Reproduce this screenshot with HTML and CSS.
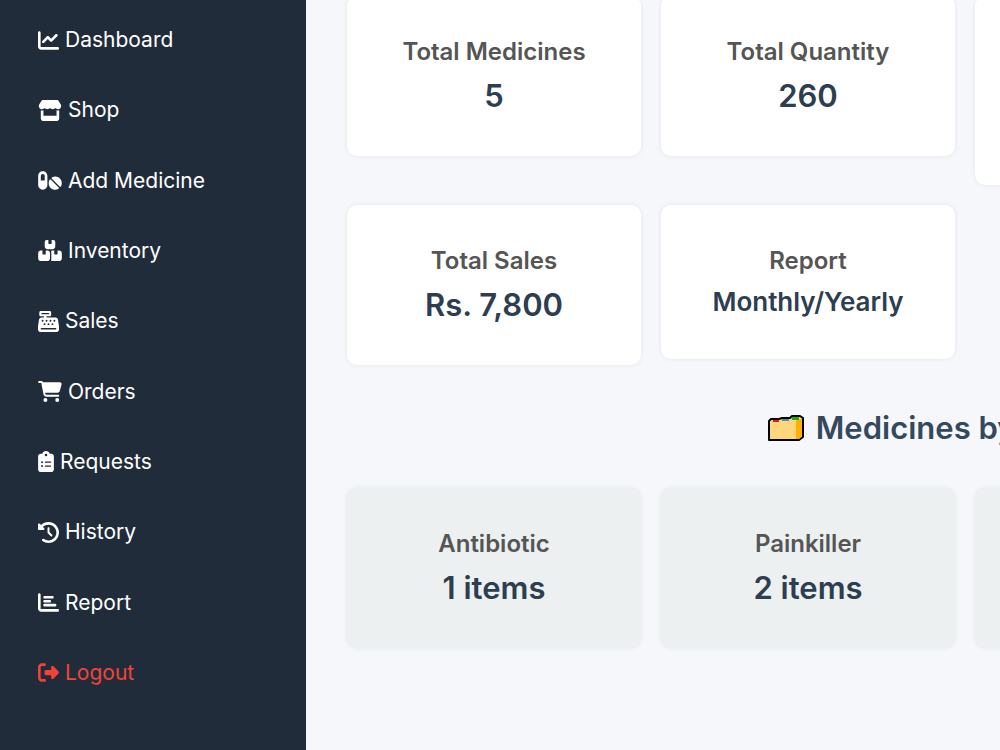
FILE: index.html
```html
<!DOCTYPE html>
<html lang="en">
<head>
<meta charset="utf-8">
<meta name="viewport" content="width=device-width, initial-scale=1">
<title>Dashboard</title>
<link rel="stylesheet" href="styles.css">
</head>
<body>
<div class="layout">
  <nav class="sidebar">
    <a class="nav-link" href="#"><svg class="icon" viewBox="0 0 512 512"><path d="M64 64c0-17.700-14.300-32-32-32S0 46.300 0 64V400c0 44.200 35.800 80 80 80H480c17.700 0 32-14.300 32-32s-14.300-32-32-32H80c-8.800 0-16-7.200-16-16V64zm406.600 86.600c12.500-12.500 12.500-32.800 0-45.300s-32.800-12.500-45.300 0L320 210.700l-57.400-57.400c-12.500-12.500-32.800-12.500-45.300 0l-112 112c-12.500 12.500-12.500 32.800 0 45.300s32.800 12.500 45.300 0L240 221.300l57.400 57.400c12.500 12.500 32.800 12.500 45.300 0l128-128z"/></svg>Dashboard</a>
    <a class="nav-link" href="#"><svg class="icon icon-wide" viewBox="0 0 576 512"><path d="M547.600 103.800L490.300 13.100C485.200 5 476.100 0 466.400 0H109.600C99.900 0 90.800 5 85.700 13.100L28.300 103.800c-29.600 46.800-3.400 111.900 51.900 119.400c4 .5 8.100 .8 12.100 .8c26.100 0 49.300-11.400 65.200-29c15.900 17.600 39.100 29 65.200 29c26.100 0 49.300-11.400 65.200-29c15.900 17.600 39.100 29 65.200 29c26.200 0 49.300-11.400 65.200-29c16 17.600 39.100 29 65.200 29c4.100 0 8.100-.3 12.100-.8c55.500-7.400 81.800-72.500 52.100-119.400zM499.700 254.900l-.1 0c-5.300 .7-10.700 1.100-16.200 1.100c-12.400 0-24.300-1.900-35.400-5.300V384H128V250.600c-11.200 3.500-23.200 5.400-35.600 5.400c-5.500 0-11-.4-16.300-1.100l-.1 0c-4.100-.6-8.100-1.300-12-2.300V384v64c0 35.300 28.700 64 64 64H448c35.300 0 64-28.700 64-64V384 252.600c-4 1-8 1.800-12.300 2.300z"/></svg>Shop</a>
    <a class="nav-link" href="#"><svg class="icon icon-wide" viewBox="0 0 576 512"><path d="M112 96c-26.500 0-48 21.500-48 48V256h96V144c0-26.500-21.500-48-48-48zM0 144C0 82.100 50.100 32 112 32s112 50.100 112 112V368c0 61.900-50.100 112-112 112S0 429.900 0 368V144zM554.900 399.400c-7.100 12.300-23.700 13.100-33.800 3.100L333.500 214.900c-10-10-9.300-26.700 3.100-33.800C360 167.700 387.100 160 416 160c88.400 0 160 71.600 160 160c0 28.900-7.700 56-21.100 79.400zm-59.500 59.500C472 472.300 444.900 480 416 480c-88.400 0-160-71.600-160-160c0-28.900 7.700-56 21.100-79.400c7.100-12.300 23.700-13.100 33.800-3.100L498.500 425.100c10 10 9.300 26.700-3.100 33.800z"/></svg>Add Medicine</a>
    <a class="nav-link" href="#"><svg class="icon icon-wide" viewBox="0 0 576 512"><path d="M248 0H208c-26.500 0-48 21.500-48 48V160c0 35.300 28.700 64 64 64H352c35.300 0 64-28.700 64-64V48c0-26.500-21.500-48-48-48H328V80c0 8.800-7.200 16-16 16H264c-8.800 0-16-7.200-16-16V0zM64 256c-35.300 0-64 28.700-64 64V448c0 35.300 28.700 64 64 64H224c35.300 0 64-28.700 64-64V320c0-35.300-28.700-64-64-64H184v80c0 8.800-7.200 16-16 16H120c-8.800 0-16-7.200-16-16V256H64zM352 512H512c35.300 0 64-28.700 64-64V320c0-35.300-28.700-64-64-64H472v80c0 8.800-7.200 16-16 16H408c-8.800 0-16-7.200-16-16V256H352c-15 0-28.800 5.100-39.700 13.800c4.900 10.400 7.700 22 7.700 34.200V464c0 12.200-2.800 23.800-7.700 34.200C323.200 506.900 337 512 352 512z"/></svg>Inventory</a>
    <a class="nav-link" href="#"><svg class="icon" viewBox="0 0 512 512"><path d="M64 0C46.300 0 32 14.300 32 32V96c0 17.700 14.300 32 32 32h80v32H87c-31.600 0-58.500 23.100-63.300 54.400L1.100 364.100C.4 368.800 0 373.600 0 378.400V448c0 35.300 28.700 64 64 64H448c35.300 0 64-28.700 64-64V378.400c0-4.800-.4-9.600-1.100-14.400L488.200 214.400C483.500 183.100 456.600 160 425 160H208V128h80c17.700 0 32-14.300 32-32V32c0-17.700-14.300-32-32-32H64zM96 48H256c8.800 0 16 7.200 16 16s-7.200 16-16 16H96c-8.800 0-16-7.200-16-16s7.200-16 16-16zM64 432c0-8.800 7.200-16 16-16H432c8.800 0 16 7.200 16 16s-7.200 16-16 16H80c-8.800 0-16-7.200-16-16zm48-168a24 24 0 1 1 0-48 24 24 0 1 1 0 48zm120-24a24 24 0 1 1 -48 0 24 24 0 1 1 48 0zM160 344a24 24 0 1 1 0-48 24 24 0 1 1 0 48zM328 240a24 24 0 1 1 -48 0 24 24 0 1 1 48 0zM256 344a24 24 0 1 1 0-48 24 24 0 1 1 0 48zM424 240a24 24 0 1 1 -48 0 24 24 0 1 1 48 0zM352 344a24 24 0 1 1 0-48 24 24 0 1 1 0 48z"/></svg>Sales</a>
    <a class="nav-link" href="#"><svg class="icon icon-wide" viewBox="0 0 576 512"><path d="M0 24C0 10.700 10.700 0 24 0H69.500c22 0 41.500 12.800 50.600 32h411c26.300 0 45.500 25 38.600 50.400l-41 152.300c-8.500 31.400-37 53.300-69.500 53.300H170.700l5.400 28.500c2.200 11.300 12.100 19.500 23.600 19.500H488c13.300 0 24 10.700 24 24s-10.700 24-24 24H199.700c-34.600 0-64.300-24.600-70.700-58.500L77.400 54.500c-.7-3.800-4-6.500-7.900-6.500H24C10.700 48 0 37.300 0 24zM128 464a48 48 0 1 1 96 0 48 48 0 1 1 -96 0zm336-48a48 48 0 1 1 0 96 48 48 0 1 1 0-96z"/></svg>Orders</a>
    <a class="nav-link" href="#"><svg class="icon icon-narrow" viewBox="0 0 384 512"><path d="M192 0c-41.800 0-77.400 26.700-90.500 64H64C28.700 64 0 92.700 0 128V448c0 35.300 28.700 64 64 64H320c35.300 0 64-28.700 64-64V128c0-35.300-28.700-64-64-64H282.500C269.400 26.700 233.800 0 192 0zm0 64a32 32 0 1 1 0 64 32 32 0 1 1 0-64zM72 272a24 24 0 1 1 48 0 24 24 0 1 1 -48 0zm104-16H304c8.800 0 16 7.200 16 16s-7.200 16-16 16H176c-8.800 0-16-7.200-16-16s7.200-16 16-16zM72 368a24 24 0 1 1 48 0 24 24 0 1 1 -48 0zm88 0c0-8.800 7.200-16 16-16H304c8.800 0 16 7.200 16 16s-7.200 16-16 16H176c-8.800 0-16-7.200-16-16z"/></svg>Requests</a>
    <a class="nav-link" href="#"><svg class="icon" viewBox="0 0 512 512"><path d="M75 75L41 41C25.900 25.900 0 36.600 0 57.900V168c0 13.300 10.700 24 24 24H134.100c21.400 0 32.100-25.900 17-41l-30.800-30.800C155 85.500 203 64 256 64c106 0 192 86 192 192s-86 192-192 192c-40.800 0-78.600-12.700-109.700-34.400c-14.500-10.100-34.400-6.600-44.600 7.900s-6.600 34.400 7.900 44.600C151.200 495 201.700 512 256 512c141.400 0 256-114.600 256-256S397.400 0 256 0C185.300 0 121.300 28.700 75 75zm181 53c-13.300 0-24 10.700-24 24V256c0 6.400 2.500 12.500 7 17l72 72c9.400 9.400 24.600 9.400 33.900 0s9.400-24.600 0-33.900l-65-65V152c0-13.300-10.700-24-24-24z"/></svg>History</a>
    <a class="nav-link" href="#"><svg class="icon" viewBox="0 0 512 512"><path d="M32 32c17.700 0 32 14.300 32 32V400c0 8.800 7.200 16 16 16H480c17.700 0 32 14.300 32 32s-14.300 32-32 32H80c-44.200 0-80-35.800-80-80V64C0 46.300 14.300 32 32 32zm96 96c0-17.700 14.300-32 32-32l192 0c17.700 0 32 14.300 32 32s-14.300 32-32 32H160c-17.700 0-32-14.300-32-32zm32 64H288c17.700 0 32 14.300 32 32s-14.300 32-32 32H160c-17.700 0-32-14.300-32-32s14.300-32 32-32zm0 96H416c17.700 0 32 14.300 32 32s-14.300 32-32 32H160c-17.700 0-32-14.300-32-32s14.300-32 32-32z"/></svg>Report</a>
    <a class="nav-link nav-link-logout" href="#"><svg class="icon" viewBox="0 0 512 512"><path d="M377.900 105.900L500.700 228.700c7.200 7.200 11.300 17.100 11.300 27.300s-4.100 20.100-11.300 27.300L377.900 406.100c-6.400 6.400-15 9.900-24 9.900c-18.700 0-33.900-15.200-33.900-33.900l0-62.100-128 0c-17.700 0-32-14.300-32-32l0-64c0-17.700 14.300-32 32-32l128 0 0-62.100c0-18.700 15.200-33.900 33.900-33.900c9 0 17.600 3.600 24 9.900zM160 96L96 96c-17.700 0-32 14.300-32 32l0 256c0 17.700 14.300 32 32 32l64 0c17.700 0 32 14.300 32 32s-14.300 32-32 32l-64 0c-53 0-96-43-96-96L0 128C0 75 43 32 96 32l64 0c17.700 0 32 14.300 32 32s-14.300 32-32 32z"/></svg>Logout</a>
  </nav>
  <main class="main">
    <div class="content">
      <section class="cards">
        <article class="card"><h3 class="card-title">Total Medicines</h3><p class="card-value">5</p></article>
        <article class="card"><h3 class="card-title">Total Quantity</h3><p class="card-value">260</p></article>
        <article class="card card-tall"></article>
        <article class="card card-tall"></article>
        <article class="card"><h3 class="card-title">Total Sales</h3><p class="card-value">Rs. 7,800</p></article>
        <article class="card"><h3 class="card-title">Report</h3><p class="card-value card-value-small">Monthly/Yearly</p></article>
      </section>
      <h2 class="section-title">
        <svg class="folder" viewBox="0 0 36 28"><path d="M1 7L3 5H11L14 4H22L24 2H32L35 4V23L31 26H1Z" fill="#ffd679" stroke="#000" stroke-width="2" stroke-linejoin="round"/><path d="M28 6L34 5V22L31 25H28Z" fill="#ffb000"/><path d="M5 6h6v2H5z" fill="#e81123"/><path d="M14 5h7v2h-7z" fill="#3f8fd1"/><path d="M24 3h7v3h-7z" fill="#16b010"/></svg>
        Medicines by Category
      </h2>
      <section class="cards">
        <article class="card card-category"><h3 class="card-title">Antibiotic</h3><p class="card-value">1 items</p></article>
        <article class="card card-category"><h3 class="card-title">Painkiller</h3><p class="card-value">2 items</p></article>
        <article class="card card-category"></article>
      </section>
    </div>
  </main>
</div>
</body>
</html>
```

FILE: styles.css
```css
* {
  box-sizing: border-box;
}

body {
  margin: 0;
  background: #f5f7fb;
  font-family: Inter, "Liberation Sans", sans-serif;
}

.layout {
  display: flex;
  height: 100vh;
  overflow: hidden;
}

.sidebar {
  flex: 0 0 306px;
  display: flex;
  flex-direction: column;
  justify-content: space-between;
  padding: 17px 38px 54px;
  background: #212c3b;
}

.nav-link {
  display: flex;
  align-items: center;
  gap: 6px;
  color: #fff;
  font-size: 21px;
  line-height: 46px;
  text-decoration: none;
}

.nav-link-logout {
  color: #f44336;
}

.icon {
  flex: none;
  width: 21px;
  height: 21px;
  fill: currentColor;
}

.icon-wide {
  width: 24px;
}

.icon-narrow {
  width: 16px;
}

.main {
  flex: 1;
  min-width: 0;
  overflow: hidden;
}

/* The board keeps four columns and is cut off by narrow windows. */
.content {
  width: max-content;
  margin-top: -4px;
  padding: 0 41px;
}

.cards {
  display: grid;
  grid-template-columns: repeat(4, 294px);
  gap: 20px;
  align-items: start;
}

.card {
  min-height: 154px;
  padding: 41px 24px;
  border-radius: 10px;
  background: #fff;
  box-shadow: 0 0 5px rgba(0, 0, 0, 0.08);
  text-align: center;
}

.card-tall {
  min-height: 189px;
}

.card-category {
  min-height: 160px;
  background: #ecf0f1;
}

.card-title {
  margin: 0 0 10px;
  color: #555;
  font-size: 24px;
  font-weight: 600;
  line-height: 29px;
}

.card-value {
  margin: 0;
  color: #2c3e50;
  font-size: 31px;
  font-weight: 600;
  line-height: 39px;
}

.card-value-small {
  font-size: 26px;
  line-height: 33px;
}

.section-title {
  display: flex;
  align-items: center;
  justify-content: center;
  gap: 12px;
  margin: 43px 0 40px;
  color: #34495e;
  font-size: 31px;
  font-weight: 600;
  line-height: 40px;
}

.folder {
  width: 36px;
  height: 28px;
}
```
